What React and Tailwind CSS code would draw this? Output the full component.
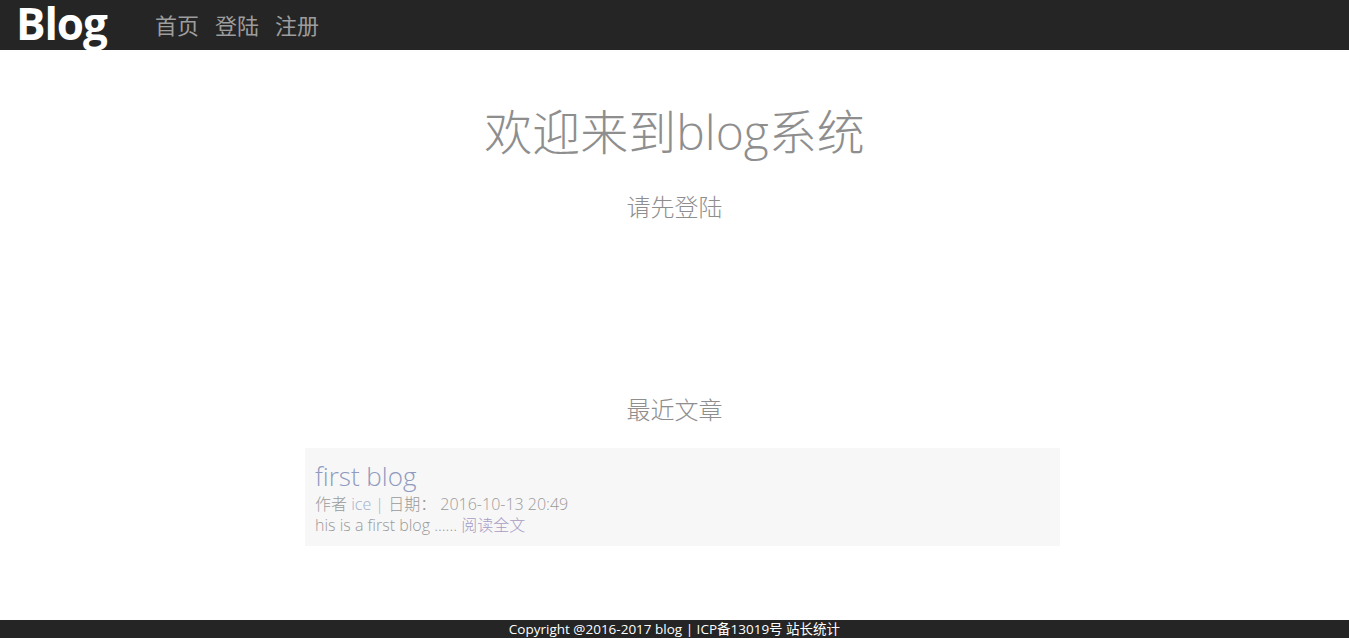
export default function App() {
  const font = { fontFamily: '"Open Sans", "Noto Sans CJK SC", sans-serif' }
  return (
    <div className="h-screen flex flex-col bg-white font-light" style={font}>
      <nav className="h-[50px] bg-[#252525] flex items-center shrink-0">
        <span className="ml-4 w-[92px] text-white text-[44px] font-bold leading-[46px] tracking-tight self-start">Blog</span>
        <div className="ml-[47px] flex gap-[16px] text-[22px] text-[#9d9d9d] font-normal">
          <a>首页</a>
          <a>登陆</a>
          <a>注册</a>
        </div>
      </nav>

      <main className="flex-1 flex flex-col items-center">
        <h1 className="mt-[52px] text-[48px] leading-[60px] text-[#8e8e8e] font-light">欢迎来到blog系统</h1>
        <p className="mt-[29px] text-[24px] leading-[32px] text-[#8e8e8e]">请先登陆</p>

        <h2 className="mt-[171px] text-[24px] leading-[32px] text-[#8e8e8e]">最近文章</h2>

        <div className="mt-[22px] w-[755px] translate-x-[8px] bg-[#f7f7f7] px-[10px] pt-[10px] pb-[10px]">
          <a className="block text-[26px] leading-[36px] text-[#8f9ac0]">first blog</a>
          <p className="text-[16px] leading-[20px] text-[#9a9a9a]">
            作者 <span className="text-[#a2b0cc]">ice | </span>日期： 2016-10-13 20:49
          </p>
          <p className="text-[16px] leading-[22px] text-[#9a9a9a]">
            his is a first blog ...... <a className="text-[#a89bc4]">阅读全文</a>
          </p>
        </div>
      </main>

      <footer className="h-[18px] bg-[#252525] text-white text-[13.5px] leading-[18px] text-center font-normal shrink-0">
        Copyright @2016-2017 blog | ICP备13019号 站长统计
      </footer>
    </div>
  )
}
